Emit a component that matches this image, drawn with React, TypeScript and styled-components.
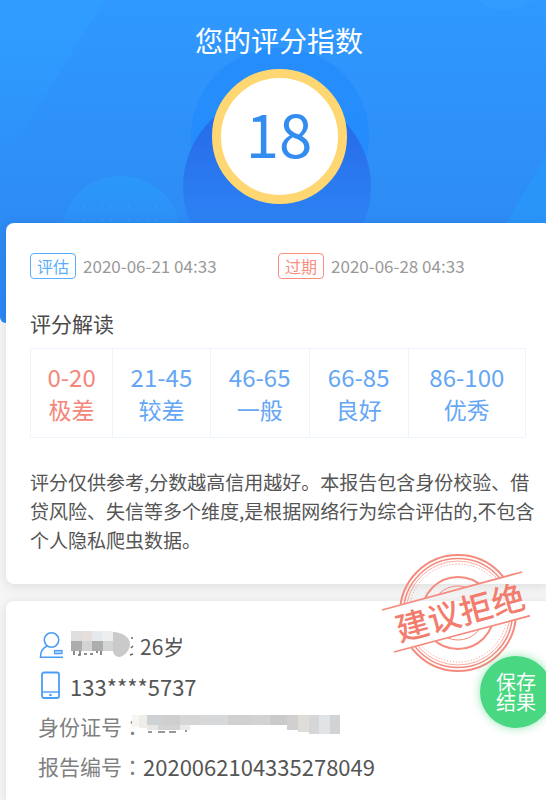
import React from "react";
import styled, { createGlobalStyle } from "styled-components";

const GlobalStyle = createGlobalStyle`
  *, *::before, *::after { box-sizing: border-box; }
  body {
    margin: 0;
    background: #f5f5f5;
    color: #555;
    font-family: "Noto Sans CJK SC", "Noto Sans", sans-serif;
    font-weight: 400;
  }
  h1, h2, p { margin: 0; font-weight: inherit; }
`;

const Viewport = styled.div`
  overflow: hidden;
`;

const Page = styled.main`
  position: relative;
  width: calc(100% + 12px);
  min-height: 100vh;
  display: flex;
  flex-direction: column;
`;

const Hero = styled.header`
  position: relative;
  display: flex;
  flex-direction: column;
  align-items: center;
  gap: 8px;
  padding: 20px 0 119px;
  overflow: hidden;
  border-radius: 0 0 6px 6px;
  background: linear-gradient(#2f99ff, #2d8bf4 70%, #2b86f6);
`;

const HeroArt = styled.svg`
  position: absolute;
  top: 0;
  left: 50%;
  width: 558px;
  height: 322px;
  margin-left: -279px;
`;

const Title = styled.h1`
  position: relative;
  color: #fff;
  font-size: 28px;
  line-height: 41px;
`;

const ScoreRing = styled.div`
  position: relative;
  display: flex;
  align-items: center;
  justify-content: center;
  width: 135px;
  height: 135px;
  padding-bottom: 10px;
  border: 9px solid #ffd772;
  border-radius: 50%;
  background: #fff;
  color: #338df0;
  font-size: 60px;
  line-height: 60px;
`;

const Card = styled.section`
  position: relative;
  margin: 0 6px;
  border-radius: 8px;
  background: #fff;
  box-shadow: 0 2px 12px rgba(0, 0, 0, 0.1);
`;

const ScoreCard = styled(Card)`
  margin-top: -100px;
  padding: 30px 26px 30px 24px;
`;

const Dates = styled.div`
  display: grid;
  grid-template-columns: 1fr 1fr;
  color: #999;
  font-size: 17px;
  line-height: 26px;
`;

const DateItem = styled.div`
  display: flex;
  align-items: center;
  gap: 7px;
`;

const Tag = styled.span<{ $color: string }>`
  padding: 0 6px;
  border: 1px solid ${(p) => p.$color};
  border-radius: 4px;
  color: ${(p) => p.$color};
  font-size: 16px;
  line-height: 24px;
`;

const Heading = styled.h2`
  margin-top: 28px;
  color: #4a4a4a;
  font-size: 21px;
  line-height: 32px;
`;

const Scale = styled.table`
  width: 100%;
  margin-top: 9px;
  border-collapse: collapse;
  table-layout: fixed;
`;

const Band = styled.td<{ $active?: boolean; $width: string }>`
  width: ${(p) => p.$width};
  padding: 11px 0;
  border: 1px solid #edf4fd;
  color: ${(p) => (p.$active ? "#f5877a" : "#65a6f6")};
  font-size: 24px;
  line-height: 33px;
  text-align: center;
`;

const BandName = styled.div`
  font-size: 23px;
`;

const Note = styled.p`
  margin: 29px -12px 0 0;
  font-size: 19px;
  line-height: 29px;
`;

const InfoCard = styled(Card)`
  flex: 1;
  margin-top: 17px;
  padding: 25px 24px 12px 32px;
  border-radius: 8px 8px 0 0;
`;

const Row = styled.div`
  display: flex;
  align-items: center;
  height: 40px;
  font-size: 22px;
`;

const IconSlot = styled.span`
  display: flex;
  width: 32px;
`;

const Age = styled.span`
  margin-left: 6px;
  font-size: 21px;
`;

const Label = styled.span`
  width: 105px;
  color: #808080;
  font-size: 21px;
`;

const Colon = styled.span`
  font-family: "Noto Sans CJK TC", sans-serif;
`;

const Stamp = styled.svg`
  position: absolute;
  top: -53px;
  right: 22px;
  width: 150px;
  height: 130px;
`;

const SaveButton = styled.button`
  position: absolute;
  top: 55px;
  right: 0;
  width: 72px;
  height: 72px;
  padding: 0 14px;
  border: 0;
  border-radius: 50%;
  background: #49d781;
  box-shadow: 0 0 10px rgba(73, 215, 129, 0.6);
  color: #fff;
  font: 400 20px/20px "Noto Sans CJK SC", sans-serif;
  cursor: pointer;
`;

const bands = [
  { range: "0-20", name: "极差", width: "16.6%", active: true },
  { range: "21-45", name: "较差", width: "19.7%" },
  { range: "46-65", name: "一般", width: "20%" },
  { range: "66-85", name: "良好", width: "20%" },
  { range: "86-100", name: "优秀", width: "23.7%" },
];

type Tile = [number, number, number, number, string];

const nameTiles: Tile[] = [
  [1, 0, 11, 10, "#dfdedf"], [12, 0, 10, 10, "#e5dedb"], [22, 0, 10, 10, "#e6eaee"],
  [32, 0, 11, 10, "#eeeeef"], [1, 10, 11, 10, "#acabad"], [12, 10, 10, 10, "#d4d3d3"],
  [22, 10, 11, 10, "#acadae"], [33, 10, 10, 10, "#d3d4d4"],
];

const idTiles: Tile[] = [
  [0, 0, 7, 12, "#f7f5f4"], [7, 0, 8, 13, "#efede8"], [15, 0, 16, 10, "#ced2d5"],
  [31, 0, 17, 10, "#cfcfd0"], [48, 0, 21, 10, "#d8d5d5"], [69, 0, 27, 10, "#d7d8d9"],
  [96, 0, 26, 10, "#d1d1d2"], [122, 0, 16, 10, "#d5d2d2"], [138, 0, 17, 10, "#cacaca"],
  [155, 0, 11, 15, "#d1cfcf"], [166, 0, 11, 17, "#dfddd8"], [177, 0, 10, 19, "#d5d6d8"],
  [187, 0, 11, 19, "#e1e4e7"], [198, 0, 10, 19, "#d2d3d4"], [15, 10, 11, 5, "#e7e7e7"],
  [26, 10, 22, 5, "#d3d3d3"], [48, 10, 10, 5, "#eaeaea"],
];

const Tiles = ({ tiles }: { tiles: Tile[] }) => (
  <>
    {tiles.map(([x, y, w, h, fill]) => (
      <rect key={`${x}-${y}`} x={x} y={y} width={w} height={h} fill={fill} />
    ))}
  </>
);

const UserIcon = () => (
  <svg width="25" height="28" viewBox="0 0 25 28" fill="none" stroke="#4b9df5" strokeWidth="1.6">
    <circle cx="13.5" cy="8" r="7.2" />
    <path d="M9 14C4.500 16 2.500 19.500 2.500 25.200h22.500" />
    <rect x="16.500" y="18.500" width="7.500" height="3.200" fill="#a9d1fb" strokeWidth="1.2" />
  </svg>
);

const PhoneIcon = () => (
  <svg width="22" height="30" viewBox="0 0 22 30" fill="none" stroke="#4b9df5" strokeWidth="1.8">
    <rect x="4" y="1.500" width="17" height="25.500" rx="2" />
    <path d="M4 21h17" strokeWidth="1.4" />
    <circle cx="12.500" cy="24" r="1.300" fill="#4b9df5" stroke="none" />
  </svg>
);

export default function App() {
  return (
    <Viewport>
      <GlobalStyle />
      <Page>
        <Hero>
          <HeroArt viewBox="0 0 558 322" aria-hidden="true">
            <defs>
              <linearGradient id="deep" x1="0" y1="0" x2="0" y2="1">
                <stop offset="0" stopColor="#236ce8" />
                <stop offset="0.25" stopColor="#2870eb" />
                <stop offset="0.7" stopColor="#2d83f4" />
                <stop offset="1" stopColor="#2b87f6" />
              </linearGradient>
              <linearGradient id="bubble" x1="0" y1="0" x2="0" y2="1">
                <stop offset="0" stopColor="#2b98fa" />
                <stop offset="0.5" stopColor="#2b98fa" stopOpacity="0.2" />
                <stop offset="1" stopColor="#2b98fa" stopOpacity="0" />
              </linearGradient>
              <linearGradient id="beam" x1="0" y1="0" x2="0" y2="1">
                <stop offset="0" stopColor="#2f9fff" stopOpacity="0.7" />
                <stop offset="1" stopColor="#2f9fff" stopOpacity="0" />
              </linearGradient>
              <pattern id="dots" width="9" height="14" patternUnits="userSpaceOnUse">
                <circle cx="3" cy="10" r="0.8" fill="#6ab8ff" opacity="0.35" />
              </pattern>
            </defs>
            <path d="M0 0H104L36 110 0 172Z" fill="url(#beam)" />
            <circle cx="505" cy="-33" r="43" fill="#39a0ff" opacity="0.4" />
            <path d="M558 135 490 250H558Z" fill="#2a98fb" opacity="0.7" />
            <circle cx="121" cy="236" r="60" fill="url(#bubble)" />
            <rect x="75" y="194" width="82" height="30" fill="url(#dots)" />
            <circle cx="280" cy="137" r="89" fill="#228bfc" opacity="0.8" />
            <circle cx="277" cy="187" r="94" fill="url(#deep)" />
            <path d="M191 137a89 89 0 0 1 178 0c-25-50-153-50-178 0Z" fill="#268dfc" />
          </HeroArt>
          <Title>您的评分指数</Title>
          <ScoreRing>18</ScoreRing>
        </Hero>

        <ScoreCard>
          <Dates>
            <DateItem><Tag $color="#5aaefa">评估</Tag><time>2020-06-21 04:33</time></DateItem>
            <DateItem><Tag $color="#f88d80">过期</Tag><time>2020-06-28 04:33</time></DateItem>
          </Dates>
          <Heading>评分解读</Heading>
          <Scale>
            <tbody>
              <tr>
                {bands.map((b) => (
                  <Band key={b.range} $active={b.active} $width={b.width}>
                    {b.range}
                    <BandName>{b.name}</BandName>
                  </Band>
                ))}
              </tr>
            </tbody>
          </Scale>
          <Note>
            评分仅供参考,分数越高信用越好。本报告包含身份校验、借贷风险、失信等多个维度,是根据网络行为综合评估的,不包含个人隐私爬虫数据。
          </Note>
        </ScoreCard>

        <InfoCard>
          <Row>
            <IconSlot><UserIcon /></IconSlot>
            <svg width="64" height="30" viewBox="0 0 64 30" aria-hidden="true">
              <Tiles tiles={nameTiles} />
              <path d="M43 1C52 1 60 6 60 13S53 26 49 26 43 22 43 20Z" fill="#cacaca" />
              <path d="M4 20v4M10 20v4h-2M14 23h3M20 23h3M27 20v2M31 20v4M61 7h2M61 17l2-2M60 24l3-1" fill="none" stroke="#666" strokeWidth="1.500" />
            </svg>
            <Age>26岁</Age>
          </Row>
          <Row>
            <IconSlot><PhoneIcon /></IconSlot>
            133****5737
          </Row>
          <Row>
            <Label>身份证号<Colon>：</Colon></Label>
            <svg width="208" height="22" viewBox="11 0 208 22" overflow="visible" aria-hidden="true">
              <Tiles tiles={idTiles} />
              <path d="M16 17h4M26 17h7M37 17h7M53 16h2" stroke="#777" strokeWidth="1.500" />
            </svg>
          </Row>
          <Row>
            <Label>报告编号<Colon>：</Colon></Label>
            2020062104335278049
          </Row>

          <Stamp viewBox="0 0 150 130" role="img" aria-label="建议拒绝">
            <defs>
              <clipPath id="outside">
                <path d="M0 0H150V22L0 62ZM0 108 150 68V130H0Z" />
              </clipPath>
            </defs>
            <g fill="none" stroke="#f58b7e" clipPath="url(#outside)">
              <circle cx="78" cy="65" r="58" strokeWidth="2" />
              <circle cx="78" cy="65" r="54.500" strokeWidth="1.500" />
              <circle cx="78" cy="65" r="52" strokeWidth="0.700" />
              <circle cx="78" cy="65" r="49" strokeDasharray="1 2" />
              <circle cx="78" cy="65" r="36" strokeWidth="2" />
              <circle cx="78" cy="65" r="27" strokeWidth="1" />
            </g>
            <path d="M2 62 142 24M14 104 153 67" stroke="#f58b7e" strokeWidth="1.800" />
            <text x="80" y="77" textAnchor="middle" transform="rotate(-15 80 64)" fill="#f27d6e" fontSize="33" fontWeight="500">
              建议拒绝
            </text>
          </Stamp>
          <SaveButton type="button">保存结果</SaveButton>
        </InfoCard>
      </Page>
    </Viewport>
  );
}
